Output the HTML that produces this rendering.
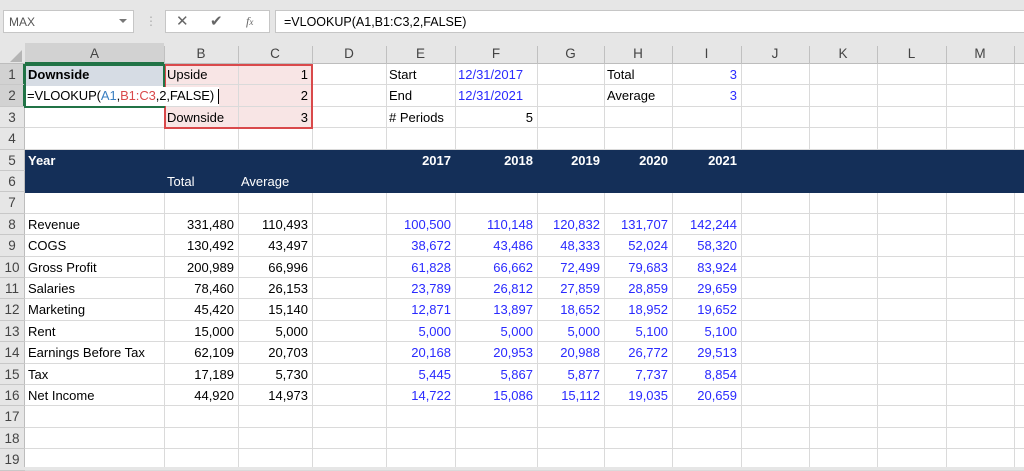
<!DOCTYPE html>
<html><head><meta charset="utf-8"><style>
*{margin:0;padding:0;box-sizing:border-box}
body{width:1024px;height:467px;overflow:hidden;background:#e6e6e6;font-family:"Liberation Sans",Arial,sans-serif;position:relative}
.a{position:absolute}
.c{position:absolute;font-size:13px;line-height:22px;white-space:nowrap;color:#000}
.r{text-align:right}
.b{color:#2a2aff}
.w{color:#fff}
</style></head><body>
<div id="g"></div>
<script>
var cols=[25,164,238,312,386,455,537,604,672,741,809,877,946,1014,1024];
var names="ABCDEFGHIJKLM";
var top0=64,rh=21.4;
function ry(i){return top0+(i-1)*rh}
var h='';
h+='<div class="a" style="left:3px;top:10px;width:131px;height:23px;background:#fff;border:1px solid #c6c6c6"></div>';
h+='<div class="c" style="left:9px;top:11px;color:#555;font-size:12px">MAX</div>';
h+='<div class="a" style="left:119px;top:19px;width:0;height:0;border-left:4px solid transparent;border-right:4px solid transparent;border-top:4px solid #777"></div>';
h+='<div class="c" style="left:145px;top:10px;color:#aaa;font-size:12px">⋮</div>';
h+='<div class="a" style="left:165px;top:10px;width:105px;height:23px;background:#fff;border:1px solid #c6c6c6"></div>';
h+='<div class="c" style="left:176px;top:11px;color:#666;font-size:15px">✕</div>';
h+='<div class="c" style="left:210px;top:11px;color:#666;font-size:15px">✔</div>';
h+='<div class="c" style="left:246px;top:10px;color:#666;font-size:12px;font-style:italic;font-family:Liberation Serif">f<span style="font-size:9px">x</span></div>';
h+='<div class="a" style="left:275px;top:10px;width:760px;height:23px;background:#fff;border:1px solid #c6c6c6"></div>';
h+='<div class="c" style="left:284px;top:11px;font-size:12.5px">=VLOOKUP(A1,B1:C3,2,FALSE)</div>';
h+='<div class="a" style="left:25px;top:64px;width:999px;height:403px;background:#fff"></div>';
h+='<div class="a" style="left:0;top:43px;width:1024px;height:21px;background:#e6e6e6;border-bottom:1px solid #bdbdbd"></div>';
h+='<div class="a" style="left:25px;top:43px;width:139px;height:21px;background:#d2d2d2;border-bottom:2px solid #217346"></div>';
for(var i=0;i<13;i++){h+='<div class="a" style="left:'+cols[i+1]+'px;top:46px;width:1px;height:18px;background:#c0c0c0"></div>';
h+='<div class="c" style="left:'+cols[i]+'px;top:43px;width:'+(cols[i+1]-cols[i])+'px;text-align:center;color:#444;font-size:13.5px">'+names[i]+'</div>';}
h+='<div class="a" style="left:10px;top:50px;width:0;height:0;border-left:12px solid transparent;border-bottom:12px solid #b5b5b5"></div>';
h+='<div class="a" style="left:164px;top:64px;width:148px;height:64px;background:#f8e5e5"></div>';
h+='<div class="a" style="left:25px;top:64px;width:139px;height:21px;background:#d6dce4"></div>';
for(var i=1;i<=13;i++){h+='<div class="a" style="left:'+cols[i]+'px;top:64px;width:1px;height:403px;background:#dadada"></div>';}
for(var r=1;r<=19;r++){var y=Math.round(ry(r+1))-1;h+='<div class="a" style="left:25px;top:'+y+'px;width:999px;height:1px;background:#dadada"></div>';}
h+='<div class="a" style="left:25px;top:150px;width:999px;height:43px;background:#142f58"></div>';
h+='<div class="a" style="left:0;top:64px;width:25px;height:403px;background:#e6e6e6;border-right:1px solid #bdbdbd"></div>';
h+='<div class="a" style="left:0;top:64px;width:25px;height:43px;background:#d2d2d2;border-right:2px solid #217346"></div>';
for(var r=1;r<=19;r++){var y=ry(r);h+='<div class="c" style="left:0;top:'+y+'px;width:24px;text-align:center;color:#444;font-size:13.5px">'+r+'</div>';
h+='<div class="a" style="left:0;top:'+(Math.round(ry(r+1))-1)+'px;width:25px;height:1px;background:#c8c8c8"></div>';}
h+='<div class="a" style="left:164px;top:64px;width:149px;height:65px;border:2px solid #d9494b"></div>';
h+='<div class="a" style="left:24px;top:64px;width:141px;height:44px;border:2px solid #217346"></div>';
h+='<div class="a" style="left:26px;top:84px;width:137px;height:2px;background:#d6dce4"></div>';
h+='<div class="a" style="left:26px;top:87px;width:193px;height:19px;background:#fff"></div>';
function t(c,r,txt,cls,extra){var x=cols[c],w=cols[c+1]-cols[c];
return '<div class="c '+(cls||'')+'" style="left:'+(x+3)+'px;top:'+ry(r)+'px;width:'+(w-7)+'px;'+(extra||'')+'">'+txt+'</div>';}
h+=t(0,1,'Downside','','font-weight:bold');
h+='<div class="c" style="left:27px;top:'+ry(2)+'px;font-size:13px;letter-spacing:-0.1px">=VLOOKUP(<span style="color:#3a7fc1">A1</span>,<span style="color:#d9494b">B1:C3</span>,2,FALSE)</div>';
h+='<div class="a" style="left:218px;top:89px;width:1px;height:15px;background:#000"></div>';
h+=t(1,1,'Upside');h+=t(2,1,'1','r');h+=t(2,2,'2','r');h+=t(1,3,'Downside');h+=t(2,3,'3','r');
h+=t(4,1,'Start');h+=t(4,2,'End');h+=t(4,3,'# Periods');
h+=t(5,1,'12/31/2017','b');h+=t(5,2,'12/31/2021','b');h+=t(5,3,'5','r');
h+=t(7,1,'Total');h+=t(7,2,'Average');h+=t(8,1,'3','r b');h+=t(8,2,'3','r b');
h+=t(0,5,'Year','w','font-weight:bold');
var yrs=['2017','2018','2019','2020','2021'];
for(var i=0;i<5;i++)h+=t(4+i,5,yrs[i],'r w','font-weight:bold');
h+=t(1,6,'Total','w');h+=t(2,6,'Average','w');
var data=[['Revenue','331,480','110,493','100,500','110,148','120,832','131,707','142,244'],
['COGS','130,492','43,497','38,672','43,486','48,333','52,024','58,320'],
['Gross Profit','200,989','66,996','61,828','66,662','72,499','79,683','83,924'],
['Salaries','78,460','26,153','23,789','26,812','27,859','28,859','29,659'],
['Marketing','45,420','15,140','12,871','13,897','18,652','18,952','19,652'],
['Rent','15,000','5,000','5,000','5,000','5,000','5,100','5,100'],
['Earnings Before Tax','62,109','20,703','20,168','20,953','20,988','26,772','29,513'],
['Tax','17,189','5,730','5,445','5,867','5,877','7,737','8,854'],
['Net Income','44,920','14,973','14,722','15,086','15,112','19,035','20,659']];
for(var k=0;k<data.length;k++){var r=8+k,d=data[k];
h+=t(0,r,d[0]);h+=t(1,r,d[1],'r');h+=t(2,r,d[2],'r');
for(var j=0;j<5;j++)h+=t(4+j,r,d[3+j],'r b');}
document.getElementById('g').innerHTML=h;
</script>
</body></html>
